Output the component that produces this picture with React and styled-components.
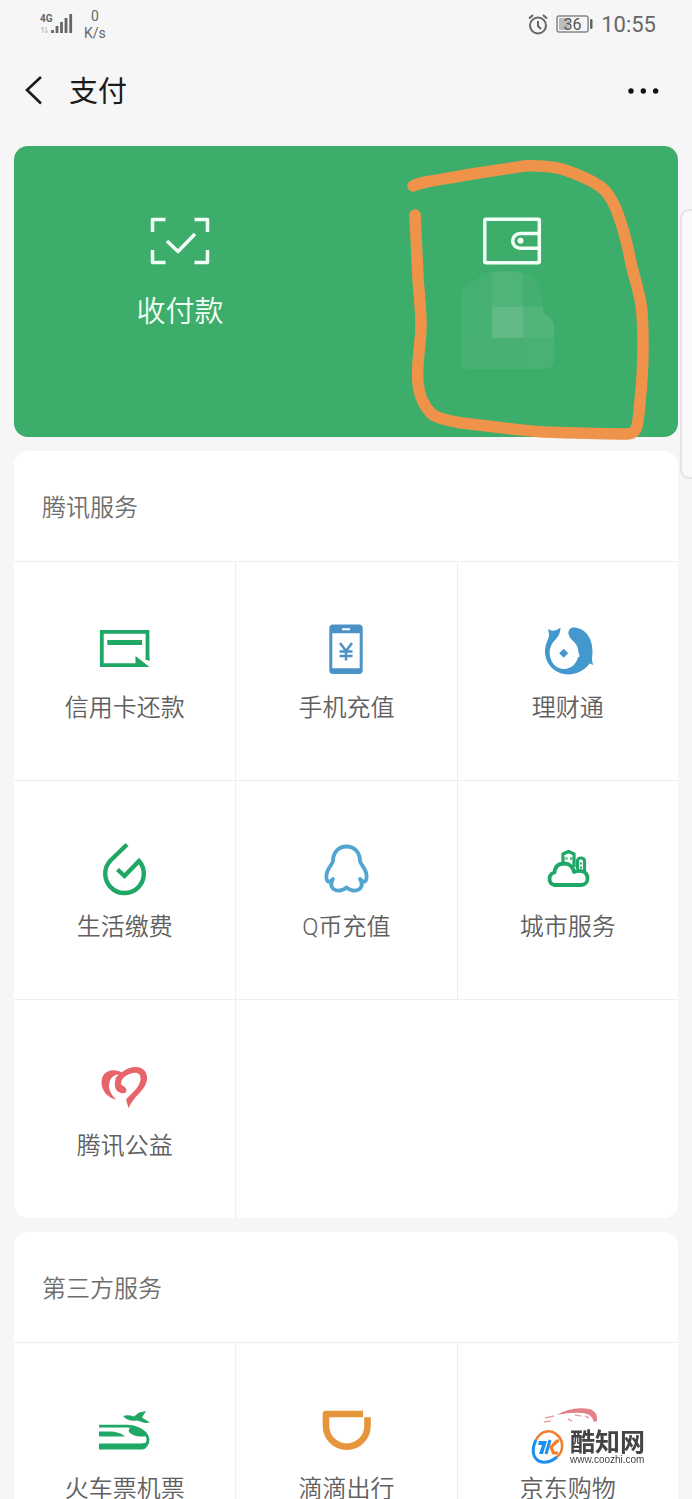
import React from "react";
import styled, { createGlobalStyle } from "styled-components";

const GlobalStyle = createGlobalStyle`
  * {
    box-sizing: border-box;
  }
  body {
    margin: 0;
    background: #f6f6f6;
    font-family: Roboto, "Noto Sans CJK SC", sans-serif;
    font-weight: 350;
  }
  button {
    border: 0;
    padding: 0;
    margin: 0;
    background: none;
    font: inherit;
    color: inherit;
    cursor: pointer;
  }
  svg {
    display: block;
    flex-shrink: 0;
    overflow: visible;
  }
`;

const Screen = styled.div`
  position: relative;
  height: 100vh;
  overflow-x: hidden;
  overflow-y: auto;
  scrollbar-width: none;
  background: #f6f6f6;
`;

const StatusBar = styled.div`
  display: flex;
  justify-content: space-between;
  align-items: center;
  height: 48px;
  padding: 0 36px 0 40px;
  color: #666;
`;

const StatusGroup = styled.div`
  display: flex;
  align-items: center;
  gap: ${({ $gap }) => $gap}px;
`;

const Speed = styled.div`
  display: flex;
  flex-direction: column;
  align-items: center;
  font-size: 14px;
  line-height: 17px;
  font-weight: 400;
  padding-top: 2px;
`;

const Clock = styled.time`
  padding-top: 2px;
  font-size: 22px;
  line-height: 26px;
  font-weight: 400;
`;

const Header = styled.header`
  display: flex;
  align-items: center;
  height: 86px;
  padding: 0 32px 0 24px;
  color: #1a1a1a;
`;

const PageTitle = styled.h1`
  flex: 1;
  margin: 0 0 0 25px;
  padding-top: 2px;
  font-size: 29px;
  line-height: 40px;
  font-weight: 400;
`;

const Content = styled.main`
  display: flex;
  flex-direction: column;
  gap: 14px;
  padding: 12px 14px 14px;
`;

const PayCard = styled.section`
  position: relative;
  display: grid;
  grid-template-columns: 1fr 1fr;
  min-height: 291px;
  border-radius: 14px;
  background: #3dad6b;
  color: #f2fff6;
`;

const PayButton = styled.button`
  display: flex;
  flex-direction: column;
  align-items: center;
  justify-content: flex-start;
  gap: ${({ $gap }) => $gap}px;
  padding-top: 71px;
`;

const PayLabel = styled.span`
  font-size: 29px;
  line-height: 40px;
`;

const Marker = styled.svg`
  position: absolute;
  right: 20px;
  top: 12px;
  pointer-events: none;
  z-index: 1;
`;

const Card = styled.section`
  border-radius: 14px;
  background: #fff;
  overflow: hidden;
`;

const CardTitle = styled.h2`
  margin: 0;
  padding: 40px 28px 36px;
  font-size: 24px;
  line-height: 34px;
  font-weight: 350;
  color: #6e6e6e;
`;

const Grid = styled.div`
  display: grid;
  grid-template-columns: repeat(3, 1fr);
`;

const Service = styled.button`
  display: flex;
  flex-direction: column;
  align-items: center;
  justify-content: flex-start;
  gap: 15px;
  height: 219px;
  padding-top: 62px;
  color: #606060;
  border-top: 1px solid #eee;
  border-left: 1px solid #eee;
  &:nth-child(3n + 1) {
    border-left: 0;
  }
`;

const ServiceLabel = styled.span`
  font-size: 24px;
  line-height: 34px;
  white-space: nowrap;
`;

const Filler = styled.div`
  grid-column: span 2;
  border-top: 1px solid #eee;
  border-left: 1px solid #eee;
`;

const EdgeHandle = styled.div`
  position: absolute;
  top: 209px;
  right: -10px;
  width: 22px;
  height: 270px;
  border: 2px solid #e4e4e4;
  border-radius: 9px;
  background: #f9f9f9;
`;

const Watermark = styled.div`
  position: fixed;
  right: 24px;
  bottom: 32px;
  display: flex;
  align-items: center;
  gap: 6px;
  padding: 4px 23px 2px 14px;
  border-radius: 20px;
  background: rgba(255, 255, 255, 0.9);
`;

const WatermarkText = styled.div`
  display: flex;
  flex-direction: column;
  color: #444;
  font-family: "Liberation Sans", "Noto Sans CJK SC", sans-serif;
  font-size: 10px;
  line-height: 10px;
  font-weight: 400;
  strong {
    font-size: 25px;
    line-height: 26px;
    font-weight: 700;
  }
`;

const GREEN = "#1fa765";
const BLUE = "#4b92c6";

const SignalIcon = () => (
  <svg width="33" height="24" viewBox="0 0 33 24" aria-label="4G">
    <text x="0" y="10" fontSize="10" fontWeight="700" fill="#666">4G</text>
    <path d="M3 21v-6l-2 2M6 15v6l2-2" stroke="#bbb" strokeWidth="1" fill="none" />
    <path
      d="M12.500 21v-3M17 21v-7M21.500 21v-11M26 21v-15M30.700 21V2"
      stroke="#666"
      strokeWidth="2.800"
      fill="none"
    />
  </svg>
);

const AlarmIcon = () => (
  <svg width="20" height="21" viewBox="0 0 20 21" fill="none" stroke="#666" strokeWidth="2">
    <circle cx="10" cy="11.500" r="8" />
    <path d="M10 7v5l3 3M1 4.500l4-3.500M19 4.500l-4-3.500" />
  </svg>
);

const BatteryIcon = () => (
  <svg width="37" height="18" viewBox="0 0 37 18" aria-label="36%">
    <rect x="3" y="3" width="10" height="12" fill="#bbb" />
    <rect x="1" y="1" width="31" height="16" rx="2" fill="none" stroke="#888" strokeWidth="1.500" />
    <rect x="34" y="4" width="2.500" height="10" rx="1" fill="#666" />
    <text x="16.500" y="14.500" fontSize="16" fontWeight="400" textAnchor="middle" fill="#555">36</text>
  </svg>
);

const BackIcon = () => (
  <svg width="20" height="30" viewBox="0 0 20 30" fill="none" stroke="#1a1a1a" strokeWidth="2.600">
    <path d="M17 1 3 14l14 13.500" />
  </svg>
);

const MoreIcon = () => (
  <svg width="32" height="8" viewBox="0 0 32 8" fill="#111">
    <circle cx="3" cy="4" r="2.700" />
    <circle cx="15.300" cy="4" r="2.700" />
    <circle cx="27.600" cy="4" r="2.700" />
  </svg>
);

const ScanIcon = () => (
  <svg width="60" height="48" viewBox="0 0 60 48" fill="none" stroke="#f2fff6" strokeWidth="3.500">
    <path d="M2.500 15V2.500h13M44.500 2.500h13V15M57.500 33v12.500h-13M15.500 45.500h-13V33" strokeLinejoin="round" />
    <path d="M17 24l11 10.500L45 17" strokeLinejoin="round" />
  </svg>
);

const WalletIcon = () => (
  <svg width="60" height="48" viewBox="0 0 60 48" fill="none" stroke="#f2fff6" strokeWidth="3.500">
    <rect x="2.800" y="2.200" width="54.500" height="43.500" rx="1" />
    <path d="M57 16.500H38a7.300 7.300 0 0 0 0 14.700h19" />
    <circle cx="38.500" cy="23.800" r="3" fill="#f2fff6" stroke="none" />
  </svg>
);

const Mosaic = () => (
  <svg width="102" height="98" viewBox="0 0 102 98">
    <clipPath id="mosaic">
      <path d="M0 18Q14 11 18 6Q28 0 47 0Q68 0 76 12Q82 20 82 42Q93 48 93 55V90Q92 98 84 98H6Q0 98 0 92z" />
    </clipPath>
    <g clipPath="url(#mosaic)">
      <rect width="31" height="36" fill="#45b071" />
      <rect x="31" width="31" height="36" fill="#50b37a" />
      <rect x="62" width="31" height="36" fill="#44af70" />
      <rect y="36" width="31" height="31" fill="#46b072" />
      <rect x="31" y="36" width="31" height="31" fill="#61b986" />
      <rect x="62" y="36" width="31" height="31" fill="#51b47a" />
      <rect y="67" width="31" height="31" fill="#47b072" />
      <rect x="31" y="67" width="31" height="31" fill="#47b072" />
      <rect x="62" y="67" width="31" height="31" fill="#4ab175" />
    </g>
  </svg>
);

// hand-drawn loop around the wallet
const MarkerLoop = () => (
  <Marker width="252" height="290" viewBox="406 158 252 290" aria-hidden="true">
    <path
      d="M413 186C420 182 433 181 472 174L528 165.500C541 166 552 166 562 169C577 174 590 179 601 187C610 194 615 205 619 217C624 231 627 243 630 258C633 274 638 287 641 304C643 318 643 330 643 345C643 366 642 384 640 402C639 415 638 424 636 429Q633 434 627 434C600 434 574 433 545 432C515 430 489 426 462 423C449 421 440 419 433 415C425 408 419 396 418 383C416 363 421 345 421 325C421 309 419 294 418 278L415 215"
      fill="none"
      stroke="#f0934a"
      strokeWidth="11.500"
      strokeLinecap="round"
      strokeLinejoin="round"
    />
  </Marker>
);

const Icon = ({ children, ...rest }) => (
  <svg width="52" height="52" viewBox="0 0 52 52" fill="none" {...rest}>
    {children}
  </svg>
);

const CreditCardIcon = () => (
  <Icon>
    <path d="M39 41.200H2.800V7.800H48.500V36" stroke={GREEN} strokeWidth="3.800" />
    <path d="M8.300 16H43v5H8.300zM36.500 32L50.500 43H36.500zM46.600 34l3.800 3.500v-4z" fill={GREEN} />
  </Icon>
);

const PhoneIcon = () => (
  <Icon>
    <path
      fillRule="evenodd"
      fill={BLUE}
      d="M13 .5H39a3.700 3.700 0 0 1 3.700 3.700V46.300A3.700 3.700 0 0 1 39 50H13a3.700 3.700 0 0 1-3.700-3.700V4.200A3.700 3.700 0 0 1 13 .5zM12.300 9.300V44.300H39.700V9.300zM22 4.200v2h8v-2z"
    />
    <path
      d="M20 19l6 8 6-8M26 27v9.500M19.500 27.500h13M19.500 32h13"
      stroke={BLUE}
      strokeWidth="2.500"
    />
  </Icon>
);

const FishIcon = () => (
  <Icon fill="#4399cd">
    <path d="M6 5Q12 9 18.500 3.500Q18.500 10 14 15C8.500 20 7 26 8 32C9.500 40 15 45 22 45C29 45 34.500 40 36 33C37.500 33.500 38 32 37.500 31C36 29 36.500 26 35.500 23C33 17 28 16 26.500 10C26 5 29 3 33 3.500C45 5 51 16 50.500 29C50 34 49.500 37 51.500 41L47.500 39.500C42 47 34 50.500 26 50.500C12 50 3 39 3 28C3 20 6.500 15 7 12Q7 8 6 5z" />
    <path d="M21.700 24.700l4.500 4.500-4.500 4.500-4.500-4.500z" />
  </Icon>
);

const DropIcon = () => (
  <Icon stroke={GREEN} strokeWidth="4.400">
    <path d="M28 1.500L11.500 17.500A19.300 19.300 0 1 0 40 18L25.500 33L18.500 26.500" />
  </Icon>
);

const PenguinIcon = () => (
  <Icon stroke="#51a5d0" strokeWidth="3.800" strokeLinejoin="round">
    <path d="M26.500 3.500C18 3.500 13 10 13 18C13 21 7 25 6.500 32C6 39 8.500 40.500 13 36C10 41 11 44 13.500 46C17.500 49 23 47.500 26.500 44.500C30 47.500 35.500 49 39.500 46C42 44 43 41 40 36C44.500 40.500 47 39 46.500 32C46 25 40 21 40 18C40 10 35 3.500 26.500 3.500z" />
  </Icon>
);

const CityIcon = () => (
  <Icon stroke={GREEN} strokeWidth="3.800" strokeLinejoin="round">
    <path d="M12 42A6.500 6.500 0 0 1 12.500 29.500C13 23 17 20.500 22.500 20.500C27.500 20.500 31 24 32 29C38 26.500 45.500 28 45.500 35.500C45.500 39 43 42 39 42z" />
    <path d="M21 19V11l5.500-2.500 5.500 2.500V24M35.500 26V17.500Q36 15 39 15T42.500 17.500V28" strokeWidth="3.200" />
    <path d="M23.500 15.500h2M28 15.500h2M38 20.500h2M38 24.500h2" strokeWidth="2" />
  </Icon>
);

const HeartIcon = () => (
  <Icon fill="#e6646a">
    <path d="M26 12C17 6 7 7 3.500 15C0 24 6 35 17 37.500C11 31 9 26 10.500 20.500C12 13 19 11 24 14z" />
    <path d="M17 15.500C23 9.500 28 5.500 36 5C45 4.500 50 12 47.500 20C45 29 35 34 29.500 46L27 37.500C33 31 40 26 41.500 18C42 12 39 10 34 11C26 13 23 16 22 21C22 24 25 23.500 27 26.500C28.500 30 26 32 22 31C15 29 15 22 17 15.500z" />
  </Icon>
);

const TrainIcon = () => (
  <Icon fill={GREEN}>
    <path d="M24 11Q29 9.500 35 11.500L40 7.500 47 6 43 12.500 51 17.500 46 18 38 15.500Q29 17 24 11z" />
    <path d="M0 21.200H28Q39 21.500 46 28Q51.500 34 47 40.500" fill="none" stroke={GREEN} strokeWidth="2.800" />
    <path d="M0 38.500H40Q45 39 50 36.500Q48 44.500 43 44.500H0z" />
    <path d="M0 26.500H14Q23 28 26 31.500H0z" />
    <path d="M32 22Q42 23 48 31Q36 33 30 27Q29 24 32 22z" />
  </Icon>
);

const DidiIcon = () => (
  <Icon stroke="#e6953b" strokeWidth="6.600">
    <path d="M43 9H6V21A20.700 20.700 0 0 0 47.500 21V12.300" strokeLinejoin="round" />
  </Icon>
);

const JdIcon = () => (
  <Icon>
    <path d="M15 10Q29 1 48 4Q56 7 55 16L52 17Q50 9 41 8Q28 7 15 10z" fill="#e2808c" />
    <path d="M2 17l7-1M3 13l9-2M26 14l4 2M33 10l6 1M43 11l4 2" stroke="#eda0a8" strokeWidth="1.500" />
  </Icon>
);

const CoozhiLogo = () => (
  <svg width="32" height="34" viewBox="0 0 32 34" fill="none">
    <path d="M4 10C8 1 18-1 24 4C32 10 32 21 25 27" stroke="#f57c2c" strokeWidth="2.500" />
    <path d="M4 10C-1 20 1 29 8 31.500C14 33.500 20 31 25 27" stroke="#1d8ff0" strokeWidth="3" />
    <path d="M7 11h8l-4 13H7l3-9H6z" fill="#1d8ff0" />
    <path d="M18 10l-4 14" stroke="#1d8ff0" strokeWidth="3" />
    <path d="M27 11h-2l-6 6 2.500 6H26" stroke="#f57c2c" strokeWidth="3.200" />
  </svg>
);

const tencentServices = [
  { name: "信用卡还款", icon: CreditCardIcon },
  { name: "手机充值", icon: PhoneIcon },
  { name: "理财通", icon: FishIcon },
  { name: "生活缴费", icon: DropIcon },
  { name: "Q币充值", icon: PenguinIcon },
  { name: "城市服务", icon: CityIcon },
  { name: "腾讯公益", icon: HeartIcon },
];

const thirdPartyServices = [
  { name: "火车票机票", icon: TrainIcon },
  { name: "滴滴出行", icon: DidiIcon },
  { name: "京东购物", icon: JdIcon },
];

const ServiceCard = ({ title, services }) => (
  <Card>
    <CardTitle>{title}</CardTitle>
    <Grid>
      {services.map(({ name, icon: ServiceIcon }) => (
        <Service key={name} type="button">
          <ServiceIcon />
          <ServiceLabel>{name}</ServiceLabel>
        </Service>
      ))}
      {services.length % 3 === 1 && <Filler />}
    </Grid>
  </Card>
);

const App = () => {
  return (
    <Screen>
      <GlobalStyle />
      <StatusBar>
        <StatusGroup $gap={11}>
          <SignalIcon />
          <Speed>
            <span>0</span>
            <span>K/s</span>
          </Speed>
        </StatusGroup>
        <StatusGroup $gap={8}>
          <AlarmIcon />
          <BatteryIcon />
          <Clock>10:55</Clock>
        </StatusGroup>
      </StatusBar>
      <Header>
        <button type="button" aria-label="返回">
          <BackIcon />
        </button>
        <PageTitle>支付</PageTitle>
        <button type="button" aria-label="更多">
          <MoreIcon />
        </button>
      </Header>
      <Content>
        <PayCard>
          <PayButton type="button" $gap={27}>
            <ScanIcon />
            <PayLabel>收付款</PayLabel>
          </PayButton>
          <PayButton type="button" $gap={6} aria-label="钱包">
            <WalletIcon />
            <Mosaic />
          </PayButton>
          <MarkerLoop />
        </PayCard>
        <ServiceCard title="腾讯服务" services={tencentServices} />
        <ServiceCard title="第三方服务" services={thirdPartyServices} />
      </Content>
      <EdgeHandle />
      <Watermark>
        <CoozhiLogo />
        <WatermarkText>
          <strong>酷知网</strong>
          <span>www.coozhi.com</span>
        </WatermarkText>
      </Watermark>
    </Screen>
  );
};

export default App;
